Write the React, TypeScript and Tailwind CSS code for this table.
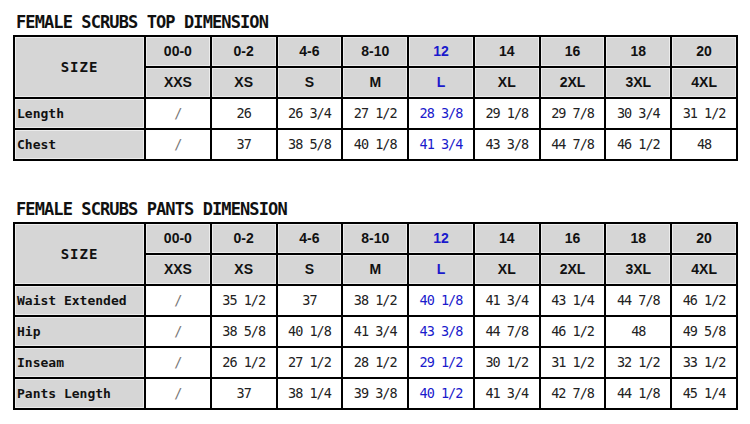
import React from "react";

const sizes = ["00-0", "0-2", "4-6", "8-10", "12", "14", "16", "18", "20"];
const letters = ["XXS", "XS", "S", "M", "L", "XL", "2XL", "3XL", "4XL"];

const topRows: [string, string[]][] = [
  ["Length", ["/", "26", "26 3/4", "27 1/2", "28 3/8", "29 1/8", "29 7/8", "30 3/4", "31 1/2"]],
  ["Chest", ["/", "37", "38 5/8", "40 1/8", "41 3/4", "43 3/8", "44 7/8", "46 1/2", "48"]],
];

const pantsRows: [string, string[]][] = [
  ["Waist Extended", ["/", "35 1/2", "37", "38 1/2", "40 1/8", "41 3/4", "43 1/4", "44 7/8", "46 1/2"]],
  ["Hip", ["/", "38 5/8", "40 1/8", "41 3/4", "43 3/8", "44 7/8", "46 1/2", "48", "49 5/8"]],
  ["Inseam", ["/", "26 1/2", "27 1/2", "28 1/2", "29 1/2", "30 1/2", "31 1/2", "32 1/2", "33 1/2"]],
  ["Pants Length", ["/", "37", "38 1/4", "39 3/8", "40 1/2", "41 3/4", "42 7/8", "44 1/8", "45 1/4"]],
];

function HeadCell({ text, blue }: { text: string; blue: boolean }) {
  return (
    <div
      className={`bg-[#d6d6d6] border border-[#ececec] flex items-center justify-center font-['Liberation_Sans',Arial,sans-serif] text-[14px] font-bold ${
        blue ? "text-[#1a1acc]" : "text-[#111]"
      }`}
    >
      {text}
    </div>
  );
}

function Table({ rows }: { rows: [string, string[]][] }) {
  return (
    <div className="grid grid-cols-[129px_repeat(9,1fr)] auto-rows-[29px] bg-black p-[2px] gap-[2px] w-[725px]">
      <div className="row-span-2 bg-[#d6d6d6] border border-[#ececec] flex items-center justify-center font-['DejaVu_Sans_Mono',monospace] text-[14px] font-bold text-[#111] tracking-[1px]">
        SIZE
      </div>
      {sizes.map((s, i) => (
        <HeadCell key={s} text={s} blue={i === 4} />
      ))}
      {letters.map((s, i) => (
        <HeadCell key={s} text={s} blue={i === 4} />
      ))}
      {rows.map(([label, vals]) => (
        <React.Fragment key={label}>
          <div className="bg-[#d6d6d6] border border-[#ececec] flex items-center pl-[1px] font-['DejaVu_Sans_Mono',monospace] text-[13px] font-bold text-[#111]">
            {label}
          </div>
          {vals.map((v, i) => (
            <div
              key={i}
              className={`bg-white flex items-center justify-center font-['DejaVu_Sans_Mono',monospace] text-[13.5px] tracking-[-1px] whitespace-pre ${
                i === 4 ? "text-[#1a1acc]" : v === "/" ? "text-[#777]" : "text-[#222]"
              }`}
            >
              {v}
            </div>
          ))}
        </React.Fragment>
      ))}
    </div>
  );
}

export default function App() {
  return (
    <div className="w-[750px] h-[424px] bg-white pl-[13px] pt-[14px]">
      <div className="font-['DejaVu_Sans_Mono',monospace] text-[17px] font-bold text-[#111] tracking-[-0.9px] leading-[16px] pl-[3px] h-[21px]">
        FEMALE SCRUBS TOP DIMENSION
      </div>
      <Table rows={topRows} />
      <div className="font-['DejaVu_Sans_Mono',monospace] text-[17px] font-bold text-[#111] tracking-[-0.9px] leading-[16px] pl-[3px] h-[21px] mt-[40px]">
        FEMALE SCRUBS PANTS DIMENSION
      </div>
      <Table rows={pantsRows} />
    </div>
  );
}
